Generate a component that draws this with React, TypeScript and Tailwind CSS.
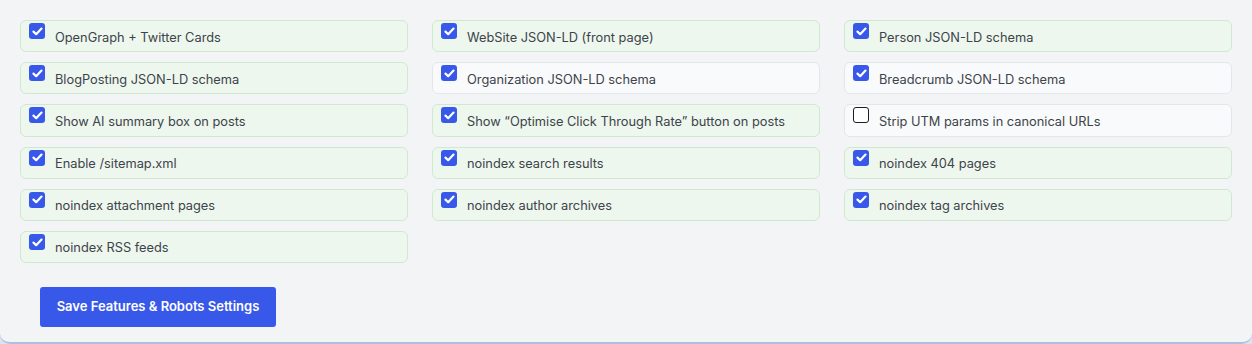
const items: { label: string; checked: boolean; on: boolean }[] = [
  { label: "OpenGraph + Twitter Cards", checked: true, on: true },
  { label: "WebSite JSON-LD (front page)", checked: true, on: true },
  { label: "Person JSON-LD schema", checked: true, on: true },
  { label: "BlogPosting JSON-LD schema", checked: true, on: true },
  { label: "Organization JSON-LD schema", checked: true, on: false },
  { label: "Breadcrumb JSON-LD schema", checked: true, on: false },
  { label: "Show AI summary box on posts", checked: true, on: true },
  { label: "Show \u201cOptimise Click Through Rate\u201d button on posts", checked: true, on: true },
  { label: "Strip UTM params in canonical URLs", checked: false, on: false },
  { label: "Enable /sitemap.xml", checked: true, on: true },
  { label: "noindex search results", checked: true, on: true },
  { label: "noindex 404 pages", checked: true, on: true },
  { label: "noindex attachment pages", checked: true, on: true },
  { label: "noindex author archives", checked: true, on: true },
  { label: "noindex tag archives", checked: true, on: true },
  { label: "noindex RSS feeds", checked: true, on: true },
];

function Box({ checked }: { checked: boolean }) {
  if (!checked) {
    return (
      <span className="w-4 h-4 shrink-0 rounded-[3px] border border-[#1e1e1e] bg-white -mt-[10px]" />
    );
  }
  return (
    <span className="w-4 h-4 shrink-0 rounded-[3px] bg-[#3858e9] flex items-center justify-center -mt-[10px]">
      <svg width="11" height="9" viewBox="0 0 11 9" fill="none">
        <path d="M1.5 4.6 L4.2 7.2 L9.5 1.6" stroke="white" strokeWidth="2.2" strokeLinecap="round" strokeLinejoin="round" />
      </svg>
    </span>
  );
}

export default function App() {
  return (
    <div className="min-h-screen bg-[#dde3ee]" style={{ fontFamily: "Inter, 'Noto Sans', sans-serif" }}>
      <div className="bg-[#f3f4f6] rounded-b-[10px] border-b-2 border-[#aebfe0] h-[344px] px-5 pt-5">
        <div className="grid grid-cols-3 gap-x-6 gap-y-[10px]">
          {items.map((it) => (
            <label
              key={it.label}
              className={
                "h-[32.2px] flex items-center gap-[10px] pl-2 rounded-md border text-[12.8px] text-[#3c434a] " +
                (it.on ? "bg-[#eef7ee] border-[#cfe8cf]" : "bg-[#f9fafb] border-[#e4e6ea]")
              }
            >
              <Box checked={it.checked} />
              <span className="mt-[2px]">{it.label}</span>
            </label>
          ))}
        </div>
        <button className="mt-6 ml-5 h-10 w-[236px] rounded-[3px] bg-[#3858e9] text-white text-[13px] font-semibold">
          Save Features &amp; Robots Settings
        </button>
      </div>
    </div>
  );
}
